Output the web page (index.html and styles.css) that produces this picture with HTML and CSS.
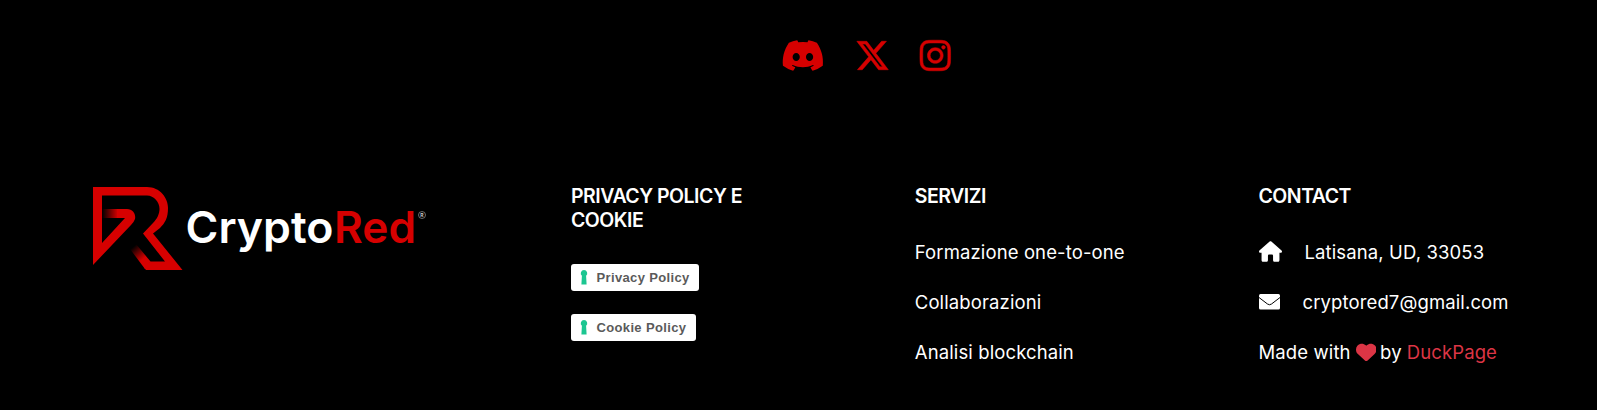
FILE: index.html
```html
<!DOCTYPE html>
<html lang="it">
<head>
<meta charset="utf-8">
<title>CryptoRed</title>
<link rel="stylesheet" href="styles.css">
</head>
<body>
<footer class="footer">
  <nav class="social">
    <a class="social-link"><svg width="43.75" height="35" viewBox="0 0 640 512"><path d="M524.531,69.836a1.5,1.5,0,0,0-.764-.7A485.065,485.065,0,0,0,404.081,32.03a1.816,1.816,0,0,0-1.923.91,337.461,337.461,0,0,0-14.9,30.6,447.848,447.848,0,0,0-134.426,0,309.541,309.541,0,0,0-15.135-30.6,1.89,1.89,0,0,0-1.924-.91A483.689,483.689,0,0,0,116.085,69.137a1.712,1.712,0,0,0-.788.676C39.068,183.651,18.186,294.69,28.43,404.354a2.016,2.016,0,0,0,.765,1.375A487.666,487.666,0,0,0,176.02,479.918a1.9,1.9,0,0,0,2.063-.676A348.2,348.2,0,0,0,208.12,430.4a1.86,1.86,0,0,0-1.019-2.588,321.173,321.173,0,0,1-45.868-21.853,1.885,1.885,0,0,1-.185-3.126c3.082-2.309,6.166-4.711,9.109-7.137a1.819,1.819,0,0,1,1.9-.256c96.229,43.917,200.41,43.917,295.5,0a1.812,1.812,0,0,1,1.924.233c2.944,2.426,6.027,4.851,9.132,7.16a1.884,1.884,0,0,1-.162,3.126,301.407,301.407,0,0,1-45.89,21.83,1.875,1.875,0,0,0-1,2.611,391.055,391.055,0,0,0,30.014,48.815,1.864,1.864,0,0,0,2.063.7A486.048,486.048,0,0,0,610.7,405.729a1.882,1.882,0,0,0,.765-1.352C623.729,277.594,590.933,167.465,524.531,69.836ZM222.491,337.58c-28.972,0-52.844-26.587-52.844-59.239S193.056,219.1,222.491,219.1c29.665,0,53.306,26.82,52.843,59.239C275.334,310.993,251.924,337.58,222.491,337.58Zm195.38,0c-28.971,0-52.843-26.587-52.843-59.239S388.437,219.1,417.871,219.1c29.667,0,53.307,26.82,52.844,59.239C470.715,310.993,447.538,337.58,417.871,337.58Z"/></svg></a>
    <a class="social-link"><svg class="bolder" width="35" height="35" viewBox="0 0 512 512"><path d="M389.2 48h70.6L305.6 224.2 487 464H345L233.7 318.6 106.5 464H35.8L200.7 275.5 26.800 48H172.400L272.900 180.900 389.200 48zM364.400 421.800h39.100L151.100 88h-42L364.400 421.800z"/></svg></a>
    <a class="social-link"><svg class="bolder" width="30.6" height="35" viewBox="0 0 448 512"><path d="M224.100 141c-63.600 0-114.900 51.300-114.900 114.900s51.300 114.900 114.900 114.900S339 319.500 339 255.900 287.700 141 224.100 141zm0 189.600c-41.100 0-74.700-33.500-74.700-74.700s33.500-74.700 74.700-74.700 74.700 33.500 74.700 74.700-33.600 74.700-74.700 74.700zm146.400-194.300c0 14.900-12 26.800-26.800 26.800-14.900 0-26.800-12-26.800-26.800s12-26.800 26.800-26.800 26.800 12 26.800 26.800zm76.100 27.200c-1.700-35.900-9.900-67.700-36.200-93.900-26.200-26.200-58-34.400-93.900-36.200-37-2.100-147.900-2.100-184.900 0-35.800 1.700-67.600 9.900-93.900 36.100s-34.400 58-36.200 93.900c-2.100 37-2.100 147.900 0 184.900 1.700 35.900 9.900 67.700 36.200 93.900s58 34.400 93.900 36.200c37 2.100 147.900 2.100 184.900 0 35.900-1.700 67.700-9.900 93.900-36.200 26.200-26.200 34.400-58 36.200-93.900 2.100-37 2.100-147.800 0-184.800zM398.800 388c-7.800 19.600-22.900 34.700-42.600 42.600-29.500 11.700-99.500 9-132.100 9s-102.700 2.600-132.100-9c-19.600-7.800-34.700-22.900-42.600-42.600-11.700-29.500-9-99.500-9-132.100s-2.600-102.700 9-132.100c7.800-19.600 22.900-34.700 42.600-42.600 29.500-11.700 99.500-9 132.100-9s102.700-2.600 132.100 9c19.600 7.800 34.700 22.900 42.600 42.600 11.700 29.500 9 99.500 9 132.100s2.700 102.700-9 132.100z"/></svg></a>
  </nav>
  <div class="columns">
    <div class="col">
      <svg class="logo" width="336" height="90" viewBox="0 0 336 90">
        <defs>
          <linearGradient id="fadeArm" gradientUnits="userSpaceOnUse" x1="9" y1="0" x2="25" y2="0"><stop offset="0" stop-color="#d60000" stop-opacity="0"/><stop offset="1" stop-color="#d60000"/></linearGradient>
          <linearGradient id="fadeLeg" gradientUnits="userSpaceOnUse" x1="40" y1="62" x2="50" y2="74"><stop offset="0" stop-color="#d60000" stop-opacity="0"/><stop offset="1" stop-color="#d60000"/></linearGradient>
        </defs>
        <path fill="#d60000" d="M0 2H54C67 2 75 13 75 23C75 33 72 38 67 43L60 48.500L89.500 85H53L51 82.500L57 76.500H72L50 48.500L60 38C64 34 66.500 29 66.500 24C66.500 17 61 10.500 54 10.500H9V58L32 33H24V24H34C40 24 43 29 42 34Q41 37 38 40L0 80Z"/>
        <path fill="url(#fadeArm)" d="M9 24H24.500V33H9Z"/>
        <path fill="url(#fadeLeg)" d="M37 64L43 59L57.500 76.500L52 84Z"/>
        <text class="wordmark" x="92.500" y="57.500" textLength="148" lengthAdjust="spacingAndGlyphs" fill="#fff">Crypto</text>
        <text class="wordmark" x="241" y="57.500" textLength="82" lengthAdjust="spacingAndGlyphs" fill="#d60000">Red</text>
        <circle cx="329" cy="30" r="3.500" fill="none" stroke="#999" stroke-width=".7"/>
        <text class="registered" x="327.200" y="32">R</text>
      </svg>
    </div>
    <div class="col">
      <h6 class="title t-privacy">PRIVACY POLICY E<br>COOKIE</h6>
      <a class="badge b-privacy"><svg width="8" height="15" viewBox="0 0 8 15"><path fill="#1cc691" d="M4 0a3.300 3.300 0 0 1 2.100 5.800L6.600 14.500H1.400L1.900 5.800A3.300 3.300 0 0 1 4 0z"/></svg>Privacy Policy</a>
      <a class="badge b-cookie"><svg width="8" height="15" viewBox="0 0 8 15"><path fill="#1cc691" d="M4 0a3.300 3.300 0 0 1 2.100 5.800L6.600 14.500H1.400L1.900 5.800A3.300 3.300 0 0 1 4 0z"/></svg>Cookie Policy</a>
    </div>
    <div class="col">
      <h6 class="title">SERVIZI</h6>
      <p class="item">Formazione one-to-one</p>
      <p class="item">Collaborazioni</p>
      <p class="item">Analisi blockchain</p>
    </div>
    <div class="col">
      <h6 class="title">CONTACT</h6>
      <p class="item"><svg class="home" width="23" height="21" viewBox="0 0 576 512"><path d="M575.800 255.500c0 18-15 32.100-32 32.100h-32l.7 160.200c0 2.700-.2 5.400-.5 8.100V472c0 22.100-17.900 40-40 40H392c-22.100 0-40-17.900-40-40V360c0-17.700-14.300-32-32-32H256c-17.700 0-32 14.300-32 32V472c0 22.100-17.900 40-40 40H104c-22.100 0-40-17.900-40-40V287.600H32c-18 0-32-14-32-32.100c0-9 3-17 10-24L266.400 8c7-7 15-8 22-8s15 2 21 7L564.800 231.500c8 7 12 15 11 24z"/></svg>Latisana, UD, 33053</p>
      <p class="item"><svg class="mail" width="21" height="16" viewBox="0 0 21 16"><rect width="21" height="15.500" rx="1.500"/><path d="M0 3.500L8.500 10Q10.500 11.500 12.500 10L21 3.500" fill="none" stroke="#000" stroke-width="1"/></svg>cryptored7@gmail.com</p>
      <p class="item"><span>Made with</span><svg class="heart" width="20.500" height="18.500" viewBox="0 28 512 456"><path d="M47.600 300.400L228.300 469.100c7.500 7 17.400 10.900 27.700 10.900s20.200-3.900 27.700-10.900L464.400 300.400c30.400-28.300 47.600-68 47.600-109.500v-5.800c0-69.900-50.500-129.500-119.400-141C347 36.500 300.600 51.400 268 84L256 96 244 84c-32.600-32.600-79-47.500-124.600-39.900C50.500 55.600 0 115.200 0 185.100v5.800c0 41.500 17.200 81.200 47.600 109.500z"/></svg><span>by</span><span class="duck">DuckPage</span></p>
    </div>
  </div>
</footer>
</body>
</html>
```
FILE: styles.css
```css
body { margin: 0; background: #000; color: #fff; font-family: Inter, "Liberation Sans", sans-serif; }
.footer { height: 410px; overflow: hidden; }
.social { display: flex; gap: 30px; padding: 38px 0 0 781px; height: 35px; }
.social-link { display: flex; fill: #d60000; }
.bolder { overflow: visible; stroke: #d60000; stroke-width: 8px; }
.columns { display: grid; grid-template-columns: 478px 343.75px 343.75px 1fr; padding: 110px 0 0 93px; }
.logo { display: block; margin-top: 2px; }
.wordmark { font-weight: 600; font-size: 44px; }
.registered { font-size: 5px; font-weight: 700; fill: #ccc; }
.title { margin: 0 0 29px; padding-top: 1px; font-size: 19.5px; line-height: 24px; font-weight: 600; letter-spacing: -.5px; white-space: nowrap; }
.t-privacy { margin-bottom: 32px; }
.item { display: flex; align-items: center; margin: 0 0 20px; height: 30px; font-size: 18.5px; white-space: nowrap; letter-spacing: .12px; fill: #fff; }
.home { margin-right: 23px; margin-top: -1px; }
.mail { margin-right: 23px; margin-top: -1px; }
.heart { fill: #dc3545; margin: 0 4px 0 5px; }
.duck { color: #dc3545; margin-left: 5px; }
.badge { display: flex; align-items: center; box-sizing: border-box; height: 27px; margin-bottom: 23px; padding-left: 9px; gap: 8.5px; border-radius: 3px; background: #fff; color: #5a5a5a; font: bold 13px "Liberation Sans", Arial, sans-serif; letter-spacing: .35px; }
.b-privacy { width: 128px; }
.b-cookie { width: 125px; }
```
